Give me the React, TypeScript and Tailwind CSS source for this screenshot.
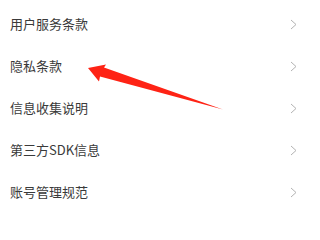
const items = ["用户服务条款", "隐私条款", "信息收集说明", "第三方SDK信息", "账号管理规范"];

function Chevron() {
  return (
    <svg width="7" height="11" viewBox="0 0 7 11" fill="none" className="shrink-0">
      <path d="M1 1l5 4.5L1 10" stroke="#b3b3b3" strokeWidth="1" />
    </svg>
  );
}

export default function App() {
  return (
    <div className="relative h-[214px] w-[306px] overflow-hidden bg-white pt-[3px]">
      <ul className="flex flex-col">
        {items.map((label) => (
          <li
            key={label}
            className="flex h-[42px] items-center justify-between pl-[10px] pr-[9px] text-[13px] text-[#3a3a3a] [font-family:'Noto_Sans_CJK_SC',sans-serif]"
          >
            <span>{label}</span>
            <Chevron />
          </li>
        ))}
      </ul>

      {/* annotation arrow */}
      <svg className="pointer-events-none absolute left-0 top-0" width="306" height="214" viewBox="0 0 306 214">
        <polygon points="88,68 106,64.5 104,67.5 223,109.5 100,76.5 99,81.5" fill="#fe2315" />
      </svg>
    </div>
  );
}
